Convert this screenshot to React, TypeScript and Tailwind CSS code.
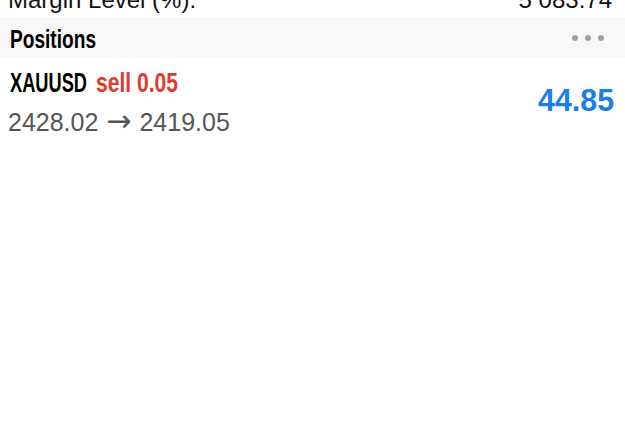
export default function App() {
  return (
    <div className="w-[625px] h-[446px] overflow-hidden bg-white font-['Liberation_Sans',Arial,sans-serif]">
      <div className="flex justify-between h-[17px] overflow-hidden px-2">
        <span className="text-[24px] leading-none text-[#111] -mt-[12px] whitespace-nowrap">Margin Level (%):</span>
        <span className="text-[24px] leading-none text-[#111] -mt-[12px] pr-[5px] whitespace-nowrap">5 083.74</span>
      </div>
      <div className="flex items-center justify-between h-[41px] bg-[#f7f7f7] px-2">
        <span className="w-[88px] pl-[2px] pt-[3px] text-[26px] leading-[28px] font-bold text-black whitespace-nowrap">
          <span className="inline-block origin-left scale-x-[0.735]">Positions</span>
        </span>
        <div className="flex gap-[7px] pr-[13px]">
          <span className="w-[6px] h-[6px] rounded-full bg-[#a0a0a0]" />
          <span className="w-[6px] h-[6px] rounded-full bg-[#a0a0a0]" />
          <span className="w-[6px] h-[6px] rounded-full bg-[#a0a0a0]" />
        </div>
      </div>
      <div className="flex items-start justify-between px-2 pt-[10px]">
        <div className="flex flex-col">
          <div className="flex text-[27px] leading-[30px] font-bold whitespace-nowrap">
            <span className="w-[88px] pl-[2px] text-black">
              <span className="inline-block origin-left scale-x-[0.675]">XAUUSD</span>
            </span>
            <span className="w-[82px] text-[#e0392f]">
              <span className="inline-block origin-left scale-x-[0.78]">sell 0.05</span>
            </span>
          </div>
          <div className="mt-[8px] text-[25px] leading-[30px] text-[#555] whitespace-nowrap">
            2428.02 <span className="font-['DejaVu_Sans',sans-serif] text-[30px] leading-[30px] mx-[1px]">→</span> 2419.05
          </div>
        </div>
        <span className="mt-[17px] pr-[3px] text-[32px] leading-[30px] font-bold text-[#1a7fe8] whitespace-nowrap">
          <span className="inline-block origin-right scale-x-[0.95]">44.85</span>
        </span>
      </div>
    </div>
  );
}
